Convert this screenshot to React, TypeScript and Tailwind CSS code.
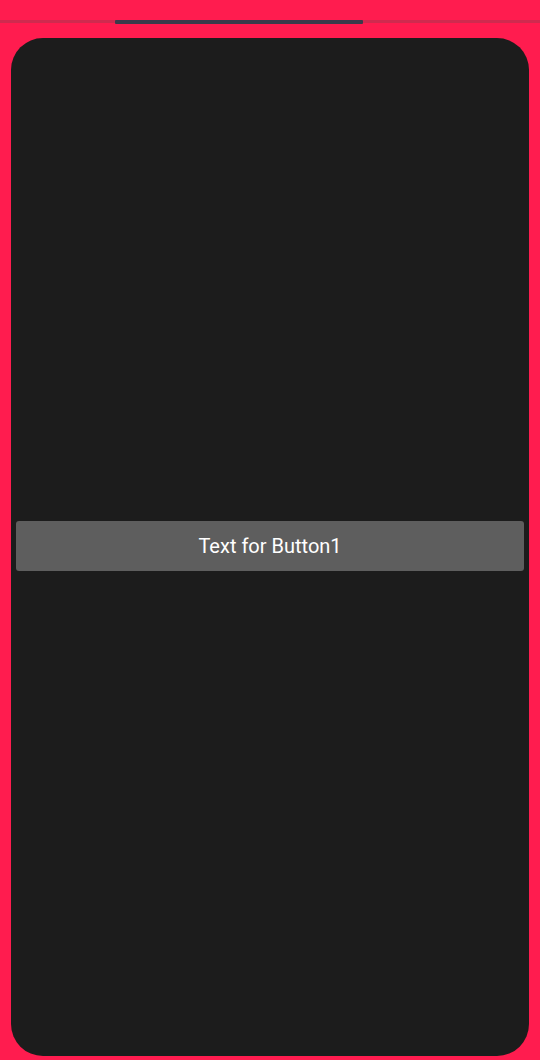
import React from "react";

export default function App() {
  return (
    <div
      className="w-[540px] h-[1060px] bg-[#ff1c4f] flex flex-col overflow-hidden"
      style={{ fontFamily: "Roboto, 'Liberation Sans', sans-serif" }}
    >
      <div className="h-[38px] flex flex-col pt-[20px]">
        <div className="relative h-[3px] bg-[#cf2a4f]">
          <div className="absolute left-[115px] -top-[0.5px] w-[248px] h-[4px] rounded-[1px] bg-[#3b3a4b]" />
        </div>
      </div>
      <div className="flex-1 mx-[11px] mb-[4px] bg-[#1c1c1c] rounded-[32px] flex flex-col justify-center px-[5px]">
        <button className="h-[50px] w-full bg-[#5e5e5e] rounded-[3px] text-white text-[20px] flex items-center justify-center -mt-[2px]">
          Text for Button1
        </button>
      </div>
    </div>
  );
}
